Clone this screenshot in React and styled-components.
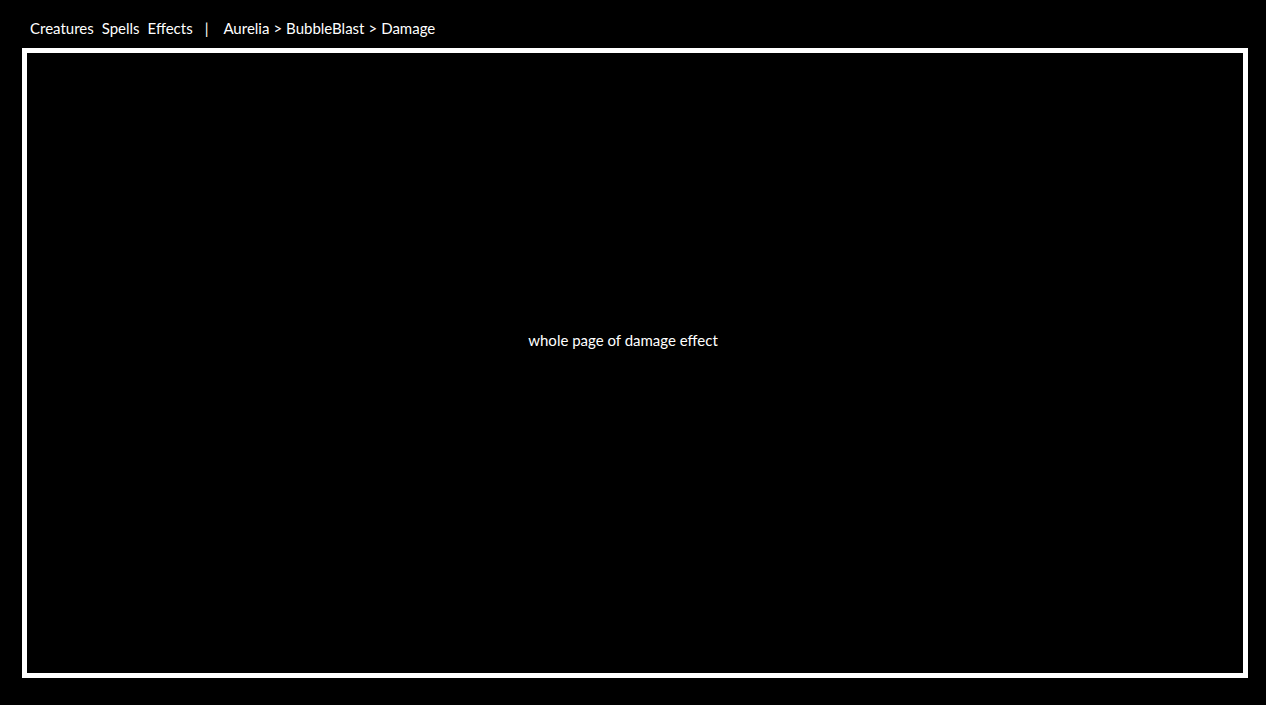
import React from "react";
import styled, { createGlobalStyle } from "styled-components";

const Global = createGlobalStyle`
  html, body { margin: 0; padding: 0; background: #000; }
  body { font-family: Lato, "Open Sans", sans-serif; color: #fff; }
`;

const Page = styled.div`
  width: 1266px;
  height: 705px;
  background: #000;
  box-sizing: border-box;
  padding: 0 18px 27px 22px;
  display: flex;
  flex-direction: column;
`;

const Header = styled.nav`
  height: 48px;
  display: flex;
  align-items: center;
  padding: 7px 0 0 8px;
  box-sizing: border-box;
  font-size: 15px;
  gap: 8px;
`;

const NavLink = styled.span`
  color: #fff;
`;

const Divider = styled.span`
  margin: 0 7px 0 4px;
`;

const Crumbs = styled.span`
  display: flex;
  gap: 4px;
`;

const Frame = styled.main`
  flex: 1;
  border: 5px solid #fff;
  display: flex;
  align-items: center;
  justify-content: center;
  padding: 0 24px 46px 0;
  font-size: 15px;
`;

export default function App() {
  return (
    <>
      <Global />
      <Page>
        <Header>
          <NavLink>Creatures</NavLink>
          <NavLink>Spells</NavLink>
          <NavLink>Effects</NavLink>
          <Divider>|</Divider>
          <Crumbs>
            <span>Aurelia</span>
            <span>&gt;</span>
            <span>BubbleBlast</span>
            <span>&gt;</span>
            <span>Damage</span>
          </Crumbs>
        </Header>
        <Frame>whole page of damage effect</Frame>
      </Page>
    </>
  );
}
